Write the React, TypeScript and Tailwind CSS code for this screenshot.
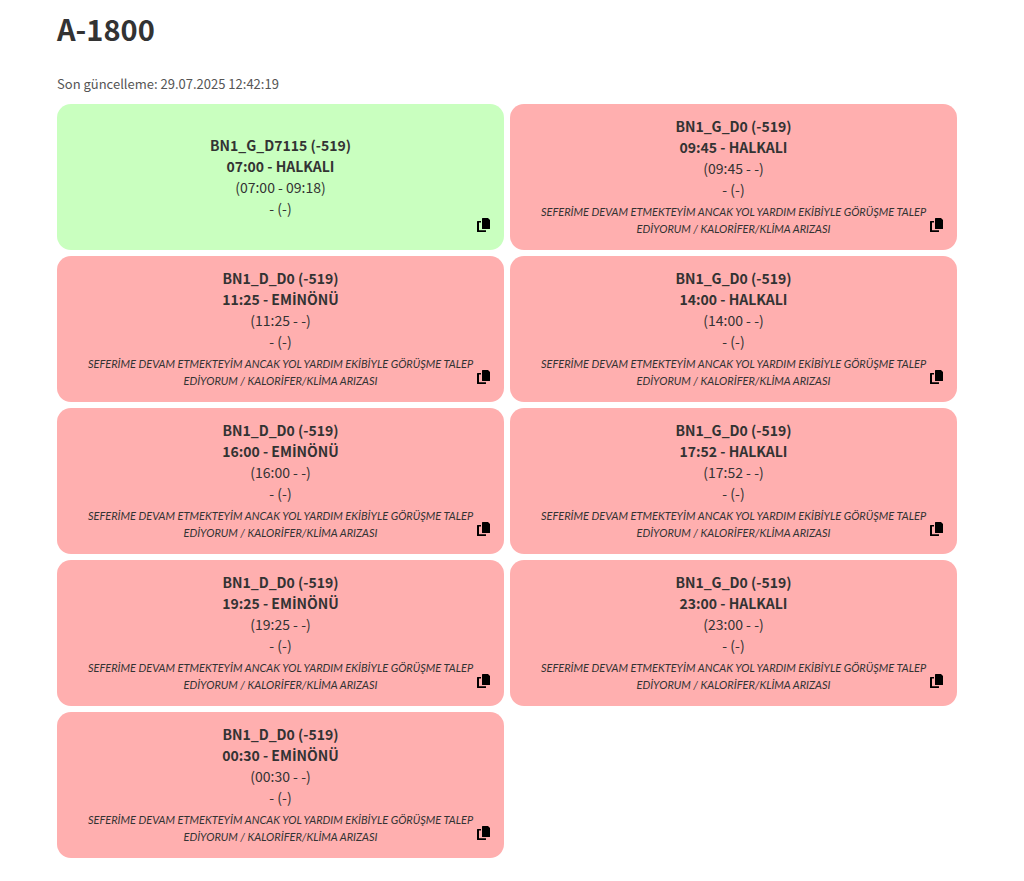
interface Trip {
  code: string;
  time: string;
  stop: string;
  actual: string;
  status: 'done' | 'cancelled';
  note?: string;
}

const FAULT_NOTE =
  'SEFERİME DEVAM ETMEKTEYİM ANCAK YOL YARDIM EKİBİYLE GÖRÜŞME TALEP EDİYORUM / KALORİFER/KLİMA ARIZASI';

const outbound = (time: string): Trip => ({
  code: 'BN1_G_D0',
  time,
  stop: 'HALKALI',
  actual: '-',
  status: 'cancelled',
  note: FAULT_NOTE,
});

const inbound = (time: string): Trip => ({
  ...outbound(time),
  code: 'BN1_D_D0',
  stop: 'EMİNÖNÜ',
});

const trips: Trip[] = [
  { code: 'BN1_G_D7115', time: '07:00', stop: 'HALKALI', actual: '09:18', status: 'done' },
  outbound('09:45'),
  inbound('11:25'),
  outbound('14:00'),
  inbound('16:00'),
  outbound('17:52'),
  inbound('19:25'),
  outbound('23:00'),
  inbound('00:30'),
];

// The CJK family has no dotted capital I and misplaces the dot, so that letter uses Open Sans
function Turkish({ text }: { text: string }) {
  return text.split(/(İ)/).map((part, i) =>
    part === 'İ' ? (
      <span key={i} className="font-['Open_Sans','Noto_Sans',sans-serif]">
        {part}
      </span>
    ) : (
      part
    ),
  );
}

function CopyIcon() {
  return (
    <svg width="14" height="14" viewBox="0 0 14 14" fill="currentColor" aria-hidden="true">
      <path d="M5.5 0H11L13 2V10.4Q13 11 12.4 11H5.6Q5 11 5 10.4V0.6Q5 0 5.5 0Z" />
      <path d="M0.6 3H4V4.6H2V12.2H9V13.4Q9 14 8.4 14H0.6Q0 14 0 13.4V3.6Q0 3 0.6 3Z" />
    </svg>
  );
}

function TripCard({ trip }: { trip: Trip }) {
  const text = `${trip.code} ${trip.time} - ${trip.stop}`;

  return (
    <article
      className={`relative flex flex-col justify-center rounded-[14px] px-6 pt-3 pb-[13px] text-center text-[14px] leading-[21px] ${
        trip.status === 'done' ? 'bg-[#c9ffbf]' : 'bg-[#ffafaf]'
      }`}
    >
      <p className="font-bold">{trip.code} (-519)</p>
      <p className="font-bold">
        {trip.time} - <Turkish text={trip.stop} />
      </p>
      <p>
        ({trip.time} - {trip.actual})
      </p>
      <p>- (-)</p>
      {trip.note && (
        <p className="mt-[3px] font-['Lato','Open_Sans',sans-serif] text-[11px] leading-[17px] italic">
          {trip.note}
        </p>
      )}
      <button
        type="button"
        aria-label="Kopyala"
        className="absolute right-[13px] bottom-[18px] cursor-pointer text-black"
        onClick={() => navigator.clipboard?.writeText(text)}
      >
        <CopyIcon />
      </button>
    </article>
  );
}

export default function App() {
  return (
    <main className="pr-[26px] pb-6 pl-4 font-['Noto_Sans_CJK_SC','Noto_Sans',sans-serif] text-[#333]">
      <div className="mx-auto max-w-[900px]">
        <h1 className="pt-[10px] text-[29px] leading-9 font-bold">A-1800</h1>
        <p className="mt-7 mb-[10px] text-[13px] leading-5 text-[#555]">
          Son güncelleme: 29.07.2025 12:42:19
        </p>
        <div className="grid grid-cols-1 gap-[6px] sm:grid-cols-2">
          {trips.map((trip) => (
            <TripCard key={trip.time} trip={trip} />
          ))}
        </div>
      </div>
    </main>
  );
}
